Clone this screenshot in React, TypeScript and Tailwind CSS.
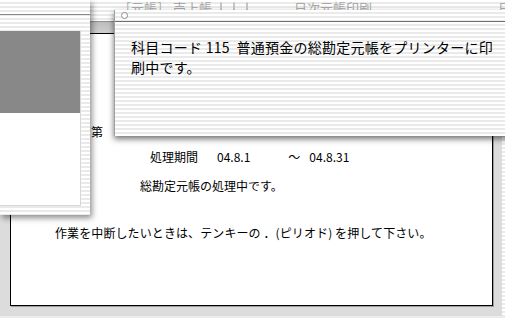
import React from "react";

const stripe =
  "bg-[repeating-linear-gradient(to_bottom,#ffffff_0px,#ffffff_2px,#eaeaea_2px,#eaeaea_4px)]";

export default function App() {
  const jp = { fontFamily: '"Noto Sans CJK JP", "Noto Sans", sans-serif' };
  return (
    <div
      className="relative w-[505px] h-[318px] overflow-hidden bg-[#dcdcdc] text-black"
      style={jp}
    >
      {/* main (background) window */}
      <div className="flex flex-col w-full h-full">
        <div
          className={`h-[22px] shrink-0 border-b border-[#8e8e8e] ${stripe} flex items-start text-[13px] leading-[16px] text-[#a8a8a8] whitespace-nowrap`}
        >
          <span className="ml-[118px]">［元帳］ 売上帳</span>
          <span className="ml-[8px] mt-[2px] w-[11px] h-[11px] rounded-full border border-[#c4c4c4]" />
          <span className="ml-[11px] mt-[2px] w-[11px] h-[11px] rounded-full border border-[#c4c4c4]" />
          <span className="ml-[11px] mt-[2px] w-[11px] h-[11px] rounded-full border border-[#c4c4c4]" />
          <span className="ml-[46px]">日次元帳印刷</span>
          <span className="ml-[126px]">日次元</span>
        </div>
        <div className="h-[11px] shrink-0 bg-gradient-to-b from-[#bdbdbd] to-[#cfcfcf]" />
        <div className="flex-1 flex flex-col">
          <div className="flex-1 flex">
            <div className="flex-1 flex pl-[10px] pr-[9px] pb-[10px]">
              <div className="flex-1 bg-white border border-black shadow-[1px_1px_0_#9c9c9c] flex flex-col text-[12px] leading-[16px] whitespace-nowrap">
                <div className="mt-[90px] pl-[80px]">第</div>
                <div className="mt-[9px] pl-[139px] flex">
                  <span>処理期間</span>
                  <span className="ml-[19px]">04.8.1</span>
                  <span className="ml-[38px]">～</span>
                  <span className="ml-[9px]">04.8.31</span>
                </div>
                <div className="mt-[13px] pl-[129px]">総勘定元帳の処理中です。</div>
                <div className="mt-[31px] pl-[44px] tracking-[0.1px]">
                  作業を中断したいときは、テンキーの ．(ピリオド) を押して下さい。
                </div>
              </div>
            </div>
            <div className={`w-[3px] ${stripe}`} />
          </div>
          <div className="h-[2px] bg-[#ececec]" />
        </div>
      </div>

      {/* left partial window */}
      <div
        className={`absolute left-0 top-0 w-[90px] h-[215px] ${stripe} shadow-[2px_3px_6px_rgba(0,0,0,0.45)] flex flex-col`}
      >
        <div className="h-[15px] shrink-0 border-b border-[#8a8a8a]" />
        <div className="mt-[16px] w-[81px] h-[175px] flex flex-col border-r border-b border-[#d6d6d6]">
          <div className="h-[82px] bg-[#888888]" />
          <div className="flex-1 bg-white" />
        </div>
      </div>

      {/* front sheet */}
      <div className="absolute left-[114px] top-[10px] w-[400px] h-[126px] border-l border-[#a0a0a0] shadow-[0_3px_6px_rgba(0,0,0,0.55)] bg-white flex flex-col">
        <div className={`h-[12px] shrink-0 border-b border-[#707070] ${stripe} flex items-center`}>
          <span className="ml-[6px] w-[7px] h-[7px] rounded-full border border-[#8a8a8a] bg-white" />
        </div>
        <div
          className={`flex-1 ${stripe} pl-[16px] pt-[15px] text-[14px] leading-[20px] tracking-[0.25px] whitespace-nowrap`}
        >
          科目コード 115&nbsp; 普通預金の総勘定元帳をプリンターに印
          <br />
          刷中です。
        </div>
      </div>
    </div>
  );
}
